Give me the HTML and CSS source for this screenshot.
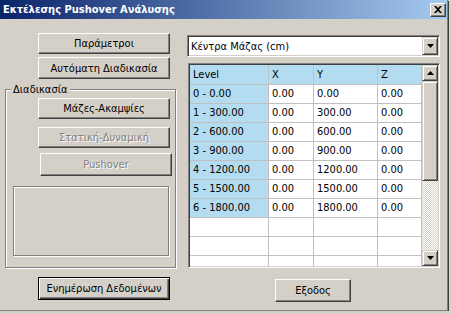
FILE: index.html
```html
<!DOCTYPE html>
<html lang="el">
<head>
    <meta charset="UTF-8">
    <title>Εκτέλεσης Pushover Ανάλυσης</title>
    <link rel="stylesheet" href="styles.css">
</head>
<body>
<div class="window">
    <div class="titlebar">
        <span class="title">Εκτέλεσης Pushover Ανάλυσης</span>
        <button class="caption-btn" type="button">
            <svg width="8" height="7" viewBox="0 0 8 7"><path d="M0 0h2l2 2 2-2h2L5 3.5 8 7H6L4 5 2 7H0l3-3.5z" fill="#000"/></svg>
        </button>
    </div>
    <div class="client">
        <div class="col-left">
            <button class="btn btn-param" type="button">Παράμετροι</button>
            <button class="btn btn-auto" type="button">Αυτόματη Διαδικασία</button>
            <div class="group">
                <span class="group-label">Διαδικασία</span>
                <button class="btn btn-mass" type="button">Μάζες-Ακαμψίες</button>
                <button class="btn btn-static" type="button" disabled>Στατική-Δυναμική</button>
                <button class="btn btn-push" type="button" disabled>Pushover</button>
                <div class="etched-box"></div>
            </div>
            <button class="btn btn-default btn-update" type="button">Ενημέρωση Δεδομένων</button>
        </div>
        <div class="col-right">
            <div class="combo">
                <span class="combo-text">Κέντρα Μάζας (cm)</span>
                <span class="combo-btn">
                    <svg width="7" height="4" viewBox="0 0 7 4"><path d="M0 0h7L3.5 4z" fill="#000"/></svg>
                </span>
            </div>
            <div class="grid">
                <div class="cells">
                    <div class="cell head">Level</div><div class="cell head">X</div><div class="cell head">Y</div><div class="cell head">Z</div>
                    <div class="cell lvl">0 - 0.00</div><div class="cell">0.00</div><div class="cell">0.00</div><div class="cell">0.00</div>
                    <div class="cell lvl">1 - 300.00</div><div class="cell">0.00</div><div class="cell">300.00</div><div class="cell">0.00</div>
                    <div class="cell lvl">2 - 600.00</div><div class="cell">0.00</div><div class="cell">600.00</div><div class="cell">0.00</div>
                    <div class="cell lvl">3 - 900.00</div><div class="cell">0.00</div><div class="cell">900.00</div><div class="cell">0.00</div>
                    <div class="cell lvl">4 - 1200.00</div><div class="cell">0.00</div><div class="cell">1200.00</div><div class="cell">0.00</div>
                    <div class="cell lvl">5 - 1500.00</div><div class="cell">0.00</div><div class="cell">1500.00</div><div class="cell">0.00</div>
                    <div class="cell lvl">6 - 1800.00</div><div class="cell">0.00</div><div class="cell">1800.00</div><div class="cell">0.00</div>
                    <div class="cell"></div><div class="cell"></div><div class="cell"></div><div class="cell"></div>
                    <div class="cell"></div><div class="cell"></div><div class="cell"></div><div class="cell"></div>
                    <div class="cell"></div><div class="cell"></div><div class="cell"></div><div class="cell"></div>
                </div>
                <div class="vscroll">
                    <span class="sb-btn">
                        <svg width="7" height="4" viewBox="0 0 7 4"><path d="M3.5 0L7 4H0z" fill="#000"/></svg>
                    </span>
                    <span class="sb-thumb"></span>
                    <span class="sb-track"></span>
                    <span class="sb-btn">
                        <svg width="7" height="4" viewBox="0 0 7 4"><path d="M0 0h7L3.5 4z" fill="#000"/></svg>
                    </span>
                </div>
            </div>
            <button class="btn btn-exit" type="button">Εξοδος</button>
        </div>
    </div>
</div>
</body>
</html>
```

FILE: styles.css
```css
body {
    margin: 0;
    background: #d4d0c8;
    font: 11px "DejaVu Sans Condensed", "Liberation Sans", sans-serif;
    color: #000;
}

.window {
    width: 447px;
    height: 310px;
    border-right: 1px solid #808080;
    border-bottom: 1px solid #808080;
    box-shadow: 1px 1px 0 #404040;
    display: flex;
    flex-direction: column;
}

/* title bar */
.titlebar {
    height: 19px;
    padding-left: 3px;
    display: flex;
    align-items: center;
    background: linear-gradient(to right, #0a246a, #a6caf0);
}
.title {
    flex: 1;
    color: #fff;
    font-weight: bold;
}
.caption-btn {
    appearance: none;
    width: 16px;
    height: 14px;
    margin-right: 1px;
    padding: 0;
    display: flex;
    align-items: center;
    justify-content: center;
    background: #d4d0c8;
    border: 1px solid;
    border-color: #fff #404040 #404040 #fff;
    box-shadow: inset -1px -1px #808080;
}

.client {
    flex: 1;
    display: flex;
}
.col-left {
    width: 177px;
    display: flex;
    flex-direction: column;
    align-items: flex-start;
}
.col-right {
    width: 253px;
    margin-left: 10px;
    display: flex;
    flex-direction: column;
    align-items: flex-start;
}

/* classic push buttons */
.btn {
    appearance: none;
    box-sizing: border-box;
    width: 132px;
    height: 21px;
    margin: 0 0 0 38px;
    padding: 0;
    font: inherit;
    color: #000;
    background: #d4d0c8;
    border: 1px solid;
    border-color: #fff #404040 #404040 #fff;
    box-shadow: inset -1px -1px #808080;
}
.btn:disabled {
    color: #808080;
    text-shadow: 1px 1px #fff;
}
.btn-default {
    border-color: #000;
    box-shadow: inset 1px 1px #fff, inset -1px -1px #404040, inset -2px -2px #808080;
}
.btn-param { margin-top: 14px; }
.btn-auto { margin-top: 3px; height: 22px; }
.btn-mass { margin: 2px 0 0 32px; }
.btn-static { margin: 8px 0 0 32px; }
.btn-push { margin: 5px 0 0 34px; height: 23px; }
.btn-update { margin-top: 9px; height: 23px; }
.btn-exit { margin: 11px 0 0 88px; width: 76px; height: 23px; }

/* group box */
.group {
    box-sizing: border-box;
    width: 171px;
    height: 179px;
    margin: 10px 0 0 5px;
    display: flex;
    flex-direction: column;
    align-items: flex-start;
    border: 1px solid #808080;
    box-shadow: inset 1px 1px #fff, 1px 1px #fff;
}
.group-label {
    height: 13px;
    margin: -7px 0 0 5px;
    padding: 0 2px;
    line-height: 13px;
    background: #d4d0c8;
}
.etched-box {
    box-sizing: border-box;
    width: 156px;
    height: 70px;
    margin: 10px 0 0 7px;
    border: 1px solid #808080;
    box-shadow: inset 1px 1px #fff, 1px 1px #fff;
}

/* combo box */
.combo {
    box-sizing: border-box;
    width: 253px;
    height: 22px;
    margin-top: 16px;
    display: flex;
    align-items: center;
    background: #fff;
    border: 1px solid;
    border-color: #808080 #fff #fff #808080;
    box-shadow: inset 1px 1px #404040, inset -1px -1px #d4d0c8;
}
.combo-text {
    flex: 1;
    padding-left: 3px;
}
.combo-btn,
.sb-btn {
    box-sizing: border-box;
    width: 16px;
    height: 18px;
    margin-right: 1px;
    display: flex;
    align-items: center;
    justify-content: center;
    background: #d4d0c8;
    border: 1px solid;
    border-color: #d4d0c8 #404040 #404040 #d4d0c8;
    box-shadow: inset 1px 1px #fff, inset -1px -1px #808080;
}

/* data grid */
.grid {
    box-sizing: border-box;
    width: 252px;
    height: 205px;
    margin: 6px 0 0 1px;
    display: flex;
    background: #fff;
    border: 1px solid;
    border-color: #808080 #fff #fff #808080;
    box-shadow: inset 1px 1px #404040, inset -1px -1px #d4d0c8;
    padding: 1px;
}
.cells {
    width: 232px;
    display: grid;
    grid-template-columns: 79px 45px 64px 44px;
    grid-template-rows: 20px;
    grid-auto-rows: 19px;
    align-content: start;
    overflow: hidden;
    font-family: "DejaVu Sans Condensed", "Liberation Sans", sans-serif;
}
.cell {
    box-sizing: border-box;
    padding-left: 3px;
    line-height: 18px;
    white-space: nowrap;
    overflow: hidden;
    border-right: 1px solid #c0c0c0;
    border-bottom: 1px solid #c0c0c0;
}
.head {
    line-height: 19px;
    background: #b4dcf0;
}
.lvl {
    background: #b4dcf0;
}

/* vertical scroll bar */
.vscroll {
    width: 16px;
    display: flex;
    flex-direction: column;
}
.sb-btn {
    height: 16px;
    margin-right: 0;
}
.sb-thumb {
    box-sizing: border-box;
    height: 100px;
    background: #d4d0c8;
    border: 1px solid;
    border-color: #d4d0c8 #404040 #404040 #d4d0c8;
    box-shadow: inset 1px 1px #fff, inset -1px -1px #808080;
}
.sb-track {
    flex: 1;
    background: repeating-conic-gradient(#fff 0 25%, #d4d0c8 0 50%) 0 0 / 2px 2px;
}
```
